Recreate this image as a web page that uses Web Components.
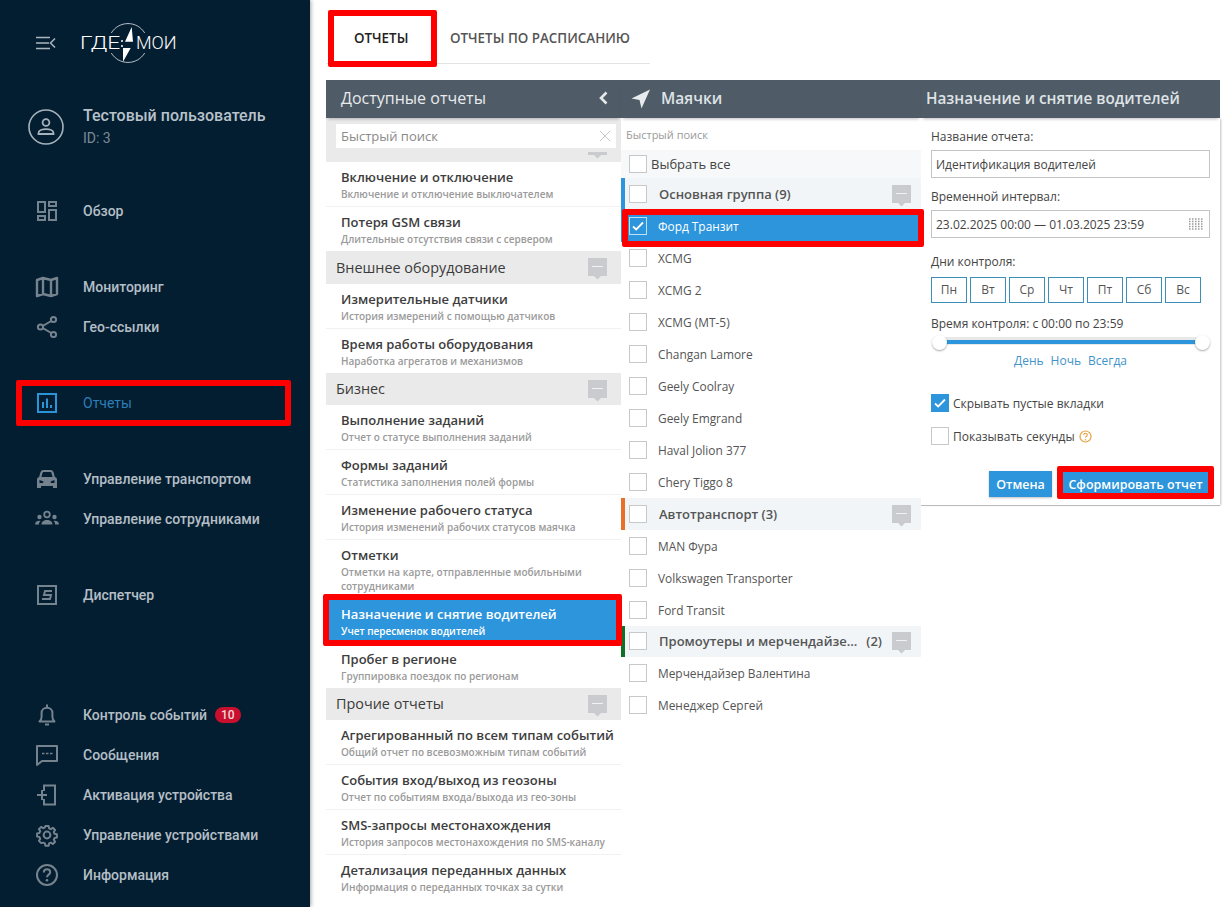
<!DOCTYPE html>
<html lang="ru">
<head>
<meta charset="utf-8">
<title>Отчеты</title>
<style>
  html, body { margin: 0; height: 100%; overflow: hidden; background: #fff; }
  body { position: relative; width: 1231px; height: 907px; }
</style>
</head>
<body>
<app-shell>
  <side-bar slot="side"></side-bar>
  <tab-bar slot="main"></tab-bar>
  <div slot="main" style="display:flex;margin-top:16px;width:894px">
    <report-list></report-list>
    <tracker-list></tracker-list>
    <report-form></report-form>
  </div>
</app-shell>
<red-box style="left:16px;top:380px;width:275px;height:46px"></red-box>
<red-box style="left:328px;top:10px;width:109px;height:57px"></red-box>
<red-box style="left:323px;top:594px;width:299px;height:52px"></red-box>
<red-box style="left:622px;top:209px;width:302px;height:38px"></red-box>
<red-box style="left:1057px;top:466px;width:157px;height:33px"></red-box>

<script>
const ICONS = {
    overview: '<path d="M3 3h7v10H3zM14 3h7v4h-7zM14 11h7v10h-7zM3 17h7v4H3z" fill="none" stroke="currentColor" stroke-width="2"/>',
    map: '<path d="M2 5l6-2 8 2 6-2v16l-6 2-8-2-6 2zM8 4v15M16 5v15" fill="none" stroke="currentColor" stroke-width="2.4" stroke-linejoin="round"/>',
    share: '<path d="M18 5L6 12l12 7" fill="none" stroke="currentColor" stroke-width="2"/><circle cx="18.5" cy="4.5" r="2.6" fill="#041e31" stroke="currentColor" stroke-width="2"/><circle cx="5.5" cy="12" r="2.6" fill="#041e31" stroke="currentColor" stroke-width="2"/><circle cx="18.5" cy="19.5" r="2.6" fill="#041e31" stroke="currentColor" stroke-width="2"/>',
    reports: '<rect x="3" y="3" width="18" height="18" fill="none" stroke="currentColor" stroke-width="2"/><path d="M7 11h2v6H7zM11 7.5h2V17h-2zM15 14h2v3h-2z" fill="currentColor"/>',
    car: '<path d="M5 11l1.500-5.500C6.800 4.600 7.400 4 8.400 4h7.200c1 0 1.600.6 1.900 1.500L19 11" fill="none" stroke="currentColor" stroke-width="2.200"/><path d="M2 12.500C2 11 3 10 4.500 10h15c1.500 0 2.500 1 2.500 2.500V21h-4v-2H6v2H2z" fill="currentColor"/><path d="M4.500 13l4 1.500-.5 1.500H4.500zM19.500 13l-4 1.500.5 1.500h3.500z" fill="#041e31"/>',
    team: '<circle cx="12" cy="7.5" r="2.800" fill="none" stroke="currentColor" stroke-width="1.800"/><circle cx="4.500" cy="10" r="2.200" fill="currentColor"/><circle cx="19.500" cy="10" r="2.200" fill="currentColor"/><path d="M6.500 17.500c0-3 2.500-4.500 5.500-4.500s5.500 1.500 5.500 4.500zM0 17.500c0-2.300 1.600-3.800 4.500-3.800l1 .2C4.300 14.800 4 16.100 4 17.500zM24 17.500c0-2.300-1.600-3.800-4.500-3.800l-1 .2c1.200.9 1.600 2.200 1.600 3.600z" fill="currentColor"/>',
    dispatcher: '<rect x="3" y="3" width="18" height="18" fill="none" stroke="currentColor" stroke-width="2"/><path d="M17 8H10l-1 4h7l-1 4H7" fill="none" stroke="currentColor" stroke-width="2"/>',
    bell: '<path d="M4.500 18.500c1.400-1.200 2.100-2.800 2.100-4.800V10c0-3 2.400-5.200 5.400-5.200s5.400 2.200 5.400 5.200v3.700c0 2 .7 3.600 2.100 4.800z" fill="none" stroke="currentColor" stroke-width="2" stroke-linejoin="round"/><path d="M12 1.500v3M10 21.500h4" stroke="currentColor" stroke-width="2"/>',
    chat: '<path d="M2 3h20v15H7l-5 4z" fill="none" stroke="currentColor" stroke-width="2" stroke-linejoin="round"/><path d="M7 10.500h2.500M11 10.500h2.500M15 10.500h2.500" stroke="currentColor" stroke-width="1.600"/>',
    activate: '<path d="M9 8V2.500h11v19H9V16" fill="none" stroke="currentColor" stroke-width="2"/><path d="M2 12h10M7 7v10" stroke="currentColor" stroke-width="2" fill="none"/>',
    gear: '<circle cx="12" cy="12" r="3.400" fill="none" stroke="currentColor" stroke-width="2"/><path d="M10.200 2h3.600l.5 2.600 2 .9 2.200-1.500 2.500 2.500-1.500 2.200.9 2 2.600.5v3.600l-2.600.5-.9 2 1.500 2.200-2.500 2.500-2.200-1.500-2 .9-.5 2.600h-3.600l-.5-2.600-2-.9L5.500 21l-2.500-2.500 1.500-2.200-.9-2-2.600-.5v-3.600l2.600-.5.9-2L3 5.500 5.500 3l2.200 1.500 2-.9z" transform="translate(1.200 1.200) scale(.9)" fill="none" stroke="currentColor" stroke-width="2.200" stroke-linejoin="round"/>',
    help: '<circle cx="12" cy="12" r="10" fill="none" stroke="currentColor" stroke-width="2"/><path d="M8.800 9.500c0-2 1.400-3.200 3.200-3.200s3.200 1.200 3.200 2.900c0 2.400-3.200 2.500-3.200 5" fill="none" stroke="currentColor" stroke-width="2"/><circle cx="12" cy="17.300" r="1.300" fill="currentColor"/>'
};

class AppShell extends HTMLElement {
    constructor() {
        super();
        this.attachShadow({mode: 'open'});
        this.shadowRoot.innerHTML = `
            <style>
                :host { display: flex; width: 1231px; height: 907px; overflow: hidden; }
                .side { flex: 0 0 310px; display: flex; box-shadow: 1px 0 4px rgba(0,0,0,.35); position: relative; }
                .main { flex: 1; padding-left: 16px; min-width: 0; }
            </style>
            <div class="side"><slot name="side"></slot></div>
            <div class="main"><slot name="main"></slot></div>
        `;
    }
}

class SideBar extends HTMLElement {
    constructor() {
        super();
        this.attachShadow({mode: 'open'});
        this.shadowRoot.innerHTML = `
            <style>
                :host {
                    display: flex; flex-direction: column; width: 310px; height: 907px; box-sizing: border-box;
                    background: #041e31; color: #b4bec6;
                    font: 500 14px Roboto, "Liberation Sans", sans-serif;
                }
                .top { display: flex; align-items: center; height: 86px; padding-left: 36px; }
                .burger { width: 20px; height: 14px; margin-right: 24px; color: #aab6bf; }
                .logo { position: relative; width: 100px; height: 44px; color: #fff; font: 300 19px Roboto, sans-serif; }
                .logo svg { position: absolute; left: 0; top: 0; }
                .logo span { position: absolute; top: 11px; line-height: 22px; transform-origin: left center; }
                .user { display: flex; align-items: center; height: 62px; margin-top: 10px; padding-left: 28px; }
                .avatar { width: 36px; height: 36px; margin-right: 19px; color: #a6b2bb; }
                .name { font-size: 16px; line-height: 22px; color: #b8c2ca; }
                .id { font-size: 14px; font-weight: 400; line-height: 22px; color: #7d8b96; }
                .nav { display: flex; flex-direction: column; flex: 1; }
                .group { display: flex; flex-direction: column; margin-top: 36px; }
                .group.first { margin-top: 33px; }
                .group.bottom { margin-top: auto; margin-bottom: 12px; }
            </style>
            <div class="top">
                <svg class="burger" viewBox="0 0 20 14"><path d="M0 1.500h14M0 7h13M0 12.500h14M19 2.500L14.500 7l4.500 4.500" fill="none" stroke="currentColor" stroke-width="1.500"/></svg>
                <div class="logo">
                    <svg width="100" height="44" viewBox="0 0 100 44">
                        <path d="M31.300 12A19.500 19.500 0 0 1 64.700 12M31.300 32A19.500 19.500 0 0 0 64.700 32" fill="none" stroke="#dfe5ea" stroke-width=".8"/>
                        <path d="M51.700 6L45 20.700h8zM43 27h7.700L43 40.700z" fill="#fff"/>
                        <circle cx="42" cy="20" r="1" fill="#fff"/><circle cx="42" cy="25" r="1" fill="#fff"/>
                    </svg>
                    <span style="left:0;transform:scaleX(1.2)">ГДЕ</span><span style="left:56px;transform:scaleX(.95)">МОИ</span>
                </div>
            </div>
            <div class="user">
                <svg class="avatar" viewBox="0 0 36 36"><circle cx="18" cy="18" r="17" fill="none" stroke="currentColor" stroke-width="1.600"/><circle cx="18" cy="13.500" r="3.400" fill="none" stroke="currentColor" stroke-width="1.800"/><path d="M10.500 25v-1c0-2.600 4-3.800 7.500-3.800s7.500 1.200 7.500 3.800v1z" fill="none" stroke="currentColor" stroke-width="1.800"/></svg>
                <div><div class="name">Тестовый пользователь</div><div class="id">ID: 3</div></div>
            </div>
            <div class="nav">
                <div class="group first"><nav-item icon="overview">Обзор</nav-item></div>
                <div class="group"><nav-item icon="map">Мониторинг</nav-item><nav-item icon="share">Гео-ссылки</nav-item></div>
                <div class="group"><nav-item icon="reports" active>Отчеты</nav-item></div>
                <div class="group"><nav-item icon="car">Управление транспортом</nav-item><nav-item icon="team">Управление сотрудниками</nav-item></div>
                <div class="group"><nav-item icon="dispatcher">Диспетчер</nav-item></div>
                <div class="group bottom">
                    <nav-item icon="bell" badge="10">Контроль событий</nav-item>
                    <nav-item icon="chat">Сообщения</nav-item>
                    <nav-item icon="activate">Активация устройства</nav-item>
                    <nav-item icon="gear">Управление устройствами</nav-item>
                    <nav-item icon="help">Информация</nav-item>
                </div>
            </div>
        `;
    }
}

class NavItem extends HTMLElement {
    connectedCallback() {
        const badge = this.getAttribute('badge');
        this.attachShadow({mode: 'open'});
        this.shadowRoot.innerHTML = `
            <style>
                :host { display: flex; align-items: center; height: 40px; padding-left: 35px; }
                :host([active]) { color: #2a7fb8; font-weight: 400; }
                svg { width: 24px; height: 24px; margin-right: 24px; color: #75838f; flex: none; }
                :host([active]) svg { color: #2b93d8; }
                .badge {
                    margin-left: 8px; height: 16px; line-height: 16px; padding: 0 6px; border-radius: 8px;
                    background: #c8102e; color: #f2d6da; font-size: 12px;
                }
            </style>
            <svg viewBox="0 0 24 24">${ICONS[this.getAttribute('icon')]}</svg>
            <slot></slot>
            ${badge ? `<span class="badge">${badge}</span>` : ''}
        `;
    }
}

class TabBar extends HTMLElement {
    constructor() {
        super();
        this.attachShadow({mode: 'open'});
        this.shadowRoot.innerHTML = `
            <style>
                :host {
                    display: flex; width: 324px; height: 64px; box-sizing: border-box; border-bottom: 1px solid #e3e3e3;
                    font: 600 13.400px "Open Sans", sans-serif; color: #555;
                }
                div { display: flex; align-items: center; height: 63px; padding-top: 13px; box-sizing: border-box; }
                .on { color: #222; padding-left: 28px; width: 124px; }
            </style>
            <div class="on">ОТЧЕТЫ</div><div>ОТЧЕТЫ ПО РАСПИСАНИЮ</div>
        `;
    }
}

class PanelHead extends HTMLElement {
    constructor() {
        super();
        this.attachShadow({mode: 'open'});
        this.shadowRoot.innerHTML = `
            <style>
                :host {
                    display: flex; align-items: center; height: 38px; box-sizing: border-box; padding-bottom: 3px;
                    background: #4f5b66; color: #e9ebed; font: 400 16px "Open Sans", sans-serif;
                    box-shadow: 0 3px 3px -2px rgba(0,0,0,.25); position: relative; z-index: 2;
                }
            </style>
            <slot></slot>
        `;
    }
}

class MinusTag extends HTMLElement {
    constructor() {
        super();
        this.attachShadow({mode: 'open'});
        this.shadowRoot.innerHTML = `
            <style>
                :host { display: block; width: 19px; height: 22px; flex: none; margin-top: 4px; }
            </style>
            <svg width="19" height="22" viewBox="0 0 19 22" style="display:block">
                <path d="M0 0h19v18h-6l-3.500 3.500L6 18H0z" fill="#c9cbce"/>
                <path d="M4 8.500h11" stroke="#f2f2f2" stroke-width="1"/>
            </svg>
        `;
    }
}

class ReportItem extends HTMLElement {
    connectedCallback() {
        this.attachShadow({mode: 'open'});
        this.shadowRoot.innerHTML = `
            <style>
                :host {
                    display: block; box-sizing: border-box; padding: 5px 0 5px 15px;
                    border-bottom: 1px solid #f1f1f1;
                    font-family: "Open Sans", sans-serif; color: #3d3d3d;
                }
                :host([last]) { border-bottom: 0; }
                :host([selected]) { background: #2d95dc; color: #fff; border-bottom-color: #2d95dc; }
                .t { font-size: 13px; font-weight: 600; line-height: 20px; white-space: nowrap; }
                .s { font-size: 10px; font-weight: 600; line-height: 14px; color: #9a9a9a; width: 270px; }
                :host([selected]) .s { color: #fff; }
            </style>
            <div class="t"><slot></slot></div>
            <div class="s">${this.getAttribute('sub')}</div>
        `;
    }
}

class ReportGroup extends HTMLElement {
    constructor() {
        super();
        this.attachShadow({mode: 'open'});
        this.shadowRoot.innerHTML = `
            <style>
                :host {
                    display: flex; align-items: center; justify-content: space-between; box-sizing: border-box;
                    height: 32.500px; padding: 0 14px 0 10px; background: #eaeaea;
                    font: 400 14.400px "Open Sans", sans-serif; color: #3b3b3b;
                }
            </style>
            <span><slot></slot></span><minus-tag></minus-tag>
        `;
    }
}

class ReportList extends HTMLElement {
    constructor() {
        super();
        this.attachShadow({mode: 'open'});
        this.shadowRoot.innerHTML = `
            <style>
                :host { display: block; flex: 0 0 295px; width: 295px; height: 827px; overflow: hidden; }
                .head { padding: 0 10px 3px 15px; justify-content: space-between; }
                .search {
                    position: relative; z-index: 1; height: 34px; box-sizing: border-box; padding: 6px 5px 4px 10px;
                    background: #eaeaea;
                }
                .box {
                    display: flex; align-items: center; justify-content: space-between; height: 24px; padding: 0 5px;
                    background: #fff; font: 400 13px "Open Sans", sans-serif; color: #8a8a8a;
                }
                .list { margin-top: -22.500px; }
            </style>
            <panel-head class="head">
                <span>Доступные отчеты</span>
                <svg width="12" height="14" viewBox="0 0 12 14" style="margin-right:2px"><path d="M9.500 1.500L4 7l5.500 5.500" fill="none" stroke="#e6e8ea" stroke-width="2.600"/></svg>
            </panel-head>
            <div class="search">
                <div class="box">
                    <span>Быстрый поиск</span>
                    <svg width="12" height="12" viewBox="0 0 12 12"><path d="M1 1l10 10M11 1L1 11" stroke="#c8c8c8" stroke-width="1"/></svg>
                </div>
            </div>
            <div class="list">
                <report-group></report-group>
                <report-item sub="Включение и отключение выключателем">Включение и отключение</report-item>
                <report-item last sub="Длительные отсутствия связи с сервером">Потеря GSM связи</report-item>
                <report-group>Внешнее оборудование</report-group>
                <report-item sub="История измерений с помощью датчиков">Измерительные датчики</report-item>
                <report-item last sub="Наработка агрегатов и механизмов">Время работы оборудования</report-item>
                <report-group>Бизнес</report-group>
                <report-item sub="Отчет о статусе выполнения заданий">Выполнение заданий</report-item>
                <report-item sub="Статистика заполнения полей формы">Формы заданий</report-item>
                <report-item sub="История изменений рабочих статусов маячка">Изменение рабочего статуса</report-item>
                <report-item sub="Отметки на карте, отправленные мобильными сотрудниками">Отметки</report-item>
                <report-item sub="Учет пересменок водителей" selected>Назначение и снятие водителей</report-item>
                <report-item last sub="Группировка поездок по регионам">Пробег в регионе</report-item>
                <report-group style="height:31.500px">Прочие отчеты</report-group>
                <report-item sub="Общий отчет по всевозможным типам событий">Агрегированный по всем типам событий</report-item>
                <report-item sub="Отчет по событиям входа/выхода из гео-зоны">События вход/выход из геозоны</report-item>
                <report-item sub="История запросов местонахождения по SMS-каналу">SMS-запросы местонахождения</report-item>
                <report-item last sub="Информация о переданных точках за сутки">Детализация переданных данных</report-item>
            </div>
        `;
    }
}

class CheckBox extends HTMLElement {
    constructor() {
        super();
        this.attachShadow({mode: 'open'});
        this.shadowRoot.innerHTML = `
            <style>
                :host {
                    display: block; flex: none; width: 18px; height: 18px; box-sizing: border-box;
                    border: 1px solid #c8c8c8; background: #fff;
                }
                :host([checked]) { background: #2d95dc; border-color: #2d95dc; }
                :host([checked][ghost]) { border-color: #bfe0f5; }
                svg { display: none; width: 100%; height: 100%; }
                :host([checked]) svg { display: block; }
            </style>
            <svg viewBox="0 0 16 16"><path d="M3 8.500l3.200 3L13 4.500" fill="none" stroke="#fff" stroke-width="1.800"/></svg>
        `;
    }
}

class TrackerRow extends HTMLElement {
    connectedCallback() {
        const group = this.hasAttribute('group');
        const count = this.getAttribute('count');
        this.attachShadow({mode: 'open'});
        this.shadowRoot.innerHTML = `
            <style>
                :host {
                    display: flex; align-items: center; height: 31.940px; box-sizing: border-box; padding-left: 8px;
                    font: 400 11.900px "Open Sans", sans-serif; color: #555;
                    position: relative;
                }
                :host([all]) { height: 28.400px; background: #f7f8f9; font-size: 13px; color: #444; }
                :host([group]) {
                    background: #f2f5f8; border-left: 4px solid var(--bar, transparent); padding-left: 4px;
                    font-weight: 600; font-size: 13px; color: #555; padding-right: 10px;
                }
                :host([selected]) { background: #2d95dc; color: #fff; }
                .label { margin-left: 11px; white-space: nowrap; }
                :host([group]) .label { margin-left: 12px; display: flex; flex: 1; }
                :host([all]) .label { margin-left: 4px; }
                .name { flex: 1; }
                .count { margin-right: 10px; }
            </style>
            <check-box ${this.hasAttribute('selected') ? 'checked ghost' : ''}></check-box>
            ${group ? `<span class="label"><span class="${count ? 'name' : ''}"><slot></slot></span>${count ? `<span class="count">${count}</span>` : ''}</span><minus-tag></minus-tag>`
                    : `<span class="label"><slot></slot></span>`}
        `;
    }
}

class TrackerList extends HTMLElement {
    constructor() {
        super();
        this.attachShadow({mode: 'open'});
        this.shadowRoot.innerHTML = `
            <style>
                :host { display: block; flex: 0 0 300px; width: 300px; font-family: "Open Sans", sans-serif; }
                .head { padding: 0 0 3px 10px; gap: 10px; }
                .head span { font-weight: 600; font-size: 15.500px; color: #dfe3e6; }
                .search { height: 32px; box-sizing: border-box; padding: 8px 0 0 5px; font-size: 11px; line-height: 18px; color: #9a9a9a; }
            </style>
            <panel-head class="head">
                <svg width="20" height="20" viewBox="0 0 20 20" style="margin-top:3px"><path d="M19 0.500L0.500 9.500l8 1.500 2 8.500z" fill="#e8ebed"/></svg>
                <span>Маячки</span>
            </panel-head>
            <div class="search">Быстрый поиск</div>
            <tracker-row all>Выбрать все</tracker-row>
            <tracker-row group style="--bar:#2d95dc">Основная группа (9)</tracker-row>
            <tracker-row selected>Форд Транзит</tracker-row>
            <tracker-row>XCMG</tracker-row>
            <tracker-row>XCMG 2</tracker-row>
            <tracker-row>XCMG (MT-5)</tracker-row>
            <tracker-row>Changan Lamore</tracker-row>
            <tracker-row>Geely Coolray</tracker-row>
            <tracker-row>Geely Emgrand</tracker-row>
            <tracker-row>Haval Jolion 377</tracker-row>
            <tracker-row>Chery Tiggo 8</tracker-row>
            <tracker-row group style="--bar:#e8702a">Автотранспорт (3)</tracker-row>
            <tracker-row>MAN Фура</tracker-row>
            <tracker-row>Volkswagen Transporter</tracker-row>
            <tracker-row>Ford Transit</tracker-row>
            <tracker-row group count="(2)" style="--bar:#10702a">Промоутеры и мерчендайзе...</tracker-row>
            <tracker-row>Мерчендайзер Валентина</tracker-row>
            <tracker-row>Менеджер Сергей</tracker-row>
        `;
    }
}

class ReportForm extends HTMLElement {
    constructor() {
        super();
        this.attachShadow({mode: 'open'});
        const days = ['Пн', 'Вт', 'Ср', 'Чт', 'Пт', 'Сб', 'Вс'];
        this.shadowRoot.innerHTML = `
            <style>
                :host { display: block; flex: 0 0 299px; width: 299px; font: 400 12px "Open Sans", sans-serif; color: #444; }
                .head { padding: 0 0 3px 5px; font-size: 15.300px; font-weight: 600; color: #dfe3e6; }
                .body {
                    height: 388px; box-sizing: border-box; padding: 11px 10px 0 10px; border-bottom: 1px solid #bbb;
                    box-shadow: 2px 0 2px -1px rgba(0,0,0,.25);
                }
                label { display: block; line-height: 16px; }
                .field {
                    display: flex; align-items: center; justify-content: space-between; height: 28px; box-sizing: border-box;
                    margin-top: 5px; padding: 0 4px; border: 1px solid #c4c4c4; color: #444;
                }
                .days { display: flex; gap: 3px; margin-top: 7px; }
                .days span {
                    width: 36px; height: 26px; box-sizing: border-box; border: 1px solid #3b8fb8; line-height: 24px; text-align: center; color: #555;
                }
                .track { display: flex; align-items: center; height: 14px; margin-top: 3px; position: relative; }
                .line { flex: 1; height: 4px; margin: 0 8px; background: #2d95dc; box-shadow: 0 -1px 0 2px #e8e8e8; }
                .knob {
                    position: absolute; top: 0; width: 15px; height: 15px; border-radius: 50%; background: #fff; box-shadow: 0 1px 2px rgba(0,0,0,.35);
                }
                .links { margin-top: 3px; color: #3f94c9; display: flex; justify-content: center; gap: 7px; }
                .check { display: flex; align-items: center; gap: 4px; }
                .actions { display: flex; justify-content: flex-end; gap: 11px; margin-top: 26px; padding-right: 2px; }
                button {
                    height: 26px; border: 0; padding: 0; background: #2d95dc; color: #fff; font: 600 12.500px "Open Sans", sans-serif;
                    box-shadow: 0 1px 2px rgba(0,0,0,.25);
                }
            </style>
            <panel-head class="head">Назначение и снятие водителей</panel-head>
            <div class="body">
                <label>Название отчета:</label>
                <div class="field">Идентификация водителей</div>
                <label style="margin-top:11px">Временной интервал:</label>
                <div class="field">
                    <span>23.02.2025 00:00 — 01.03.2025 23:59</span>
                    <svg width="17" height="12" viewBox="0 0 17 12"><path d="M1 1h15M1 3.500h15M1 6h15M1 8.500h15M1 11h15" stroke="#9a9a9a" stroke-width="1.400" stroke-dasharray="1.500 1.500"/></svg>
                </div>
                <label style="margin-top:16px">Дни контроля:</label>
                <div class="days">${days.map(d => `<span>${d}</span>`).join('')}</div>
                <label style="margin-top:13px">Время контроля: с 00:00 по 23:59</label>
                <div class="track">
                    <div class="line"></div>
                    <div class="knob" style="left:1px"></div>
                    <div class="knob" style="right:0"></div>
                </div>
                <div class="links"><span>День</span><span>Ночь</span><span>Всегда</span></div>
                <div class="check" style="margin-top:25px"><check-box checked></check-box>Скрывать пустые вкладки</div>
                <div class="check" style="margin-top:15px">
                    <check-box></check-box>Показывать секунды
                    <svg width="13" height="13" viewBox="0 0 13 13"><circle cx="6.500" cy="6.500" r="5.500" fill="none" stroke="#e8a040" stroke-width="1.200"/><path d="M4.700 5c0-1 .8-1.700 1.800-1.700S8.300 4 8.300 5c0 1.300-1.800 1.300-1.800 2.800" fill="none" stroke="#e8a040" stroke-width="1.100"/><circle cx="6.500" cy="9.700" r=".7" fill="#e8a040"/></svg>
                </div>
                <div class="actions">
                    <button style="width:63px">Отмена</button>
                    <button style="width:145px">Сформировать отчет</button>
                </div>
            </div>
        `;
    }
}

class RedBox extends HTMLElement {
    constructor() {
        super();
        this.attachShadow({mode: 'open'});
        this.shadowRoot.innerHTML = `
            <style>
                :host {
                    display: block; position: absolute; box-sizing: border-box; border: 6px solid #f00; border-radius: 2px; pointer-events: none;
                }
            </style>
        `;
    }
}

customElements.define('app-shell', AppShell);
customElements.define('side-bar', SideBar);
customElements.define('nav-item', NavItem);
customElements.define('tab-bar', TabBar);
customElements.define('panel-head', PanelHead);
customElements.define('minus-tag', MinusTag);
customElements.define('report-item', ReportItem);
customElements.define('report-group', ReportGroup);
customElements.define('report-list', ReportList);
customElements.define('check-box', CheckBox);
customElements.define('tracker-row', TrackerRow);
customElements.define('tracker-list', TrackerList);
customElements.define('report-form', ReportForm);
customElements.define('red-box', RedBox);
</script>
</body>
</html>
